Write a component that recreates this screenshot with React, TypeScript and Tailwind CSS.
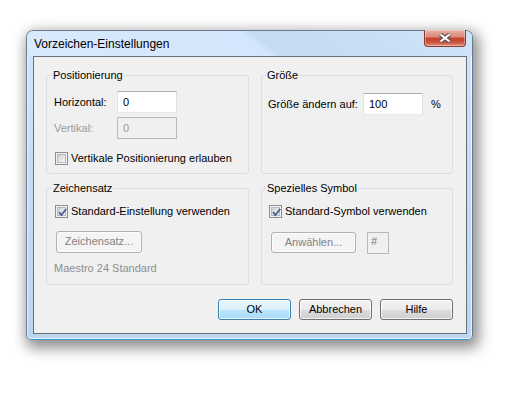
import type { ReactNode } from "react";

const CheckBox = ({ checked }: { checked?: boolean }) => (
  <span className="relative flex h-[13px] w-[13px] shrink-0 items-center justify-center border border-[#8f8f8f] bg-[#f4f4f4]">
    <span className="h-[9px] w-[9px] border border-[#b4b9bf] bg-[linear-gradient(135deg,#cdd1d7,#f7f7f7)]" />
    {checked && (
      <svg className="absolute left-[1px] top-[1px]" width="11" height="11" viewBox="0 0 11 11">
        <path d="M2 5.2 L4.4 8 L9.2 2" fill="none" stroke="#4c5f94" strokeWidth="1.8" />
      </svg>
    )}
  </span>
);

const TextBox = ({ value, disabled, className = "" }: { value: string; disabled?: boolean; className?: string }) => (
  <div
    className={
      "flex h-[22px] items-center pl-[5px] " +
      (disabled
        ? "border border-[#b8b8b8] bg-[#f0f0f0] text-[#9a9a9a] "
        : "border border-[#abadb3] border-b-[#e3e9ef] border-l-[#e2e3ea] border-r-[#dbdfe6] bg-white ") +
      className
    }
  >
    {value}
  </div>
);

const Button = ({
  children,
  kind = "normal",
  className = "",
}: {
  children: ReactNode;
  kind?: "normal" | "default" | "disabled";
  className?: string;
}) => {
  const look = {
    normal:
      "border-[#707070] bg-[linear-gradient(#f2f2f2_0%,#ebebeb_50%,#dddddd_50%,#cfcfcf_100%)] text-black",
    default:
      "border-[#3c7fb1] bg-[linear-gradient(#eaf6fd_0%,#d9f0fc_50%,#bee6fd_50%,#a7d9f5_100%)] text-black",
    disabled: "border-[#adb2b5] bg-[#f4f4f4] text-[#838383]",
  }[kind];
  return (
    <div
      className={
        "flex h-[21px] items-center justify-center whitespace-nowrap rounded-[3px] border shadow-[inset_0_0_0_1px_rgba(255,255,255,0.75)] " +
        look +
        " " +
        className
      }
    >
      {children}
    </div>
  );
};

const Group = ({ title, className = "", children }: { title: string; className?: string; children: ReactNode }) => (
  <fieldset className={"rounded-[3px] border border-[#d5dfe5] " + className}>
    <legend className="ml-[-2px] px-[1px] leading-[15px]">{title}</legend>
    {children}
  </fieldset>
);

export default function App() {
  return (
    <div className="min-h-[396px] w-[516px] whitespace-nowrap bg-white pl-[26px] pt-[30px] font-['Liberation_Sans',sans-serif] text-[11px] text-black">
      {/* window frame */}
      <div className="flex h-[310px] w-[447px] flex-col rounded-t-[7px] rounded-b-[5px] border border-[#6b7a8c] border-b-[#3b95d1] bg-[linear-gradient(180deg,#d3e6fb_0%,#c6dcf3_45%,#bdd6f0_100%)] shadow-[inset_0_0_0_1px_rgba(255,255,255,0.65),3px_5px_14px_3px_rgba(0,0,0,0.45)]">
        {/* title bar */}
        <div className="flex h-[25px] items-center justify-between rounded-t-[6px] bg-[linear-gradient(38deg,#d8e9fc_0%,#d3e6fb_51%,#c4dbf3_53.5%,#c8def5_75%,#d2e5f9_100%)] pl-[7px] pr-[6px]">
          <span className="text-[12px]">Vorzeichen-Einstellungen</span>
          <div className="-mt-[1px] flex h-[17px] w-[42px] items-center justify-center self-start rounded-b-[4px] border border-t-0 border-[#8a3a30] bg-[linear-gradient(180deg,#eab1a4_0%,#dc8a7c_42%,#c4432f_52%,#c9503a_75%,#e0957c_100%)] shadow-[inset_0_0_0_1px_rgba(255,255,255,0.35)]">
            <svg width="14" height="10" viewBox="0 0 14 10">
              <path d="M2.5 1.5 L11.5 8.5 M11.5 1.5 L2.5 8.5" stroke="#505050" strokeWidth="4.2" />
              <path d="M2.5 1.5 L11.5 8.5 M11.5 1.5 L2.5 8.5" stroke="#ffffff" strokeWidth="2.2" />
            </svg>
          </div>
        </div>

        {/* client area */}
        <div className="ml-[6px] mr-[5px] h-[278px] border border-[#646f7c] bg-[#f0f0f0] pl-[12px] pr-[13px] pt-[11px]">
          <div className="grid grid-cols-[203px_192px] gap-x-[12px] gap-y-[7px]">
            <Group title="Positionierung" className="h-[106px] px-[7px] pt-[8px]">
              <div className="flex h-[22px] items-center">
                <span className="w-[63px]">Horizontal:</span>
                <TextBox value="0" className="w-[60px]" />
              </div>
              <div className="mt-[4px] flex h-[22px] items-center">
                <span className="w-[63px] text-[#9a9a9a]">Vertikal:</span>
                <TextBox value="0" disabled className="w-[60px]" />
              </div>
              <div className="mt-[11px] flex items-center gap-[3px] pl-[1px]">
                <CheckBox />
                <span>Vertikale Positionierung erlauben</span>
              </div>
            </Group>

            <Group title="Größe" className="h-[106px] px-[6px] pt-[10px]">
              <div className="flex h-[22px] items-center">
                <span className="w-[95px]">Größe ändern auf:</span>
                <TextBox value="100" className="w-[60px]" />
                <span className="ml-[8px]">%</span>
              </div>
            </Group>

            <Group title="Zeichensatz" className="h-[104px] px-[7px] pt-[7px]">
              <div className="flex items-center gap-[3px] pl-[1px]">
                <CheckBox checked />
                <span>Standard-Einstellung verwenden</span>
              </div>
              <Button kind="disabled" className="ml-[2px] mt-[11px] h-[22px] w-[86px]">
                Zeichensatz...
              </Button>
              <div className="mt-[8px] leading-[15px] text-[#8e8e8e]">Maestro 24 Standard</div>
            </Group>

            <Group title="Spezielles Symbol" className="h-[104px] px-[6px] pt-[7px]">
              <div className="flex items-center gap-[3px] pl-[1px]">
                <CheckBox checked />
                <span>Standard-Symbol verwenden</span>
              </div>
              <div className="mt-[12px] flex h-[22px] items-center">
                <Button kind="disabled" className="ml-[3px] w-[85px]">
                  Anwählen...
                </Button>
                <div className="ml-[11px] h-[22px] w-[22px] border border-[#b8b8b8] bg-[#f0f0f0] pl-[3px] pt-[1px] leading-[15px] text-[#7a7a7a]">
                  #
                </div>
              </div>
            </Group>
          </div>

          <div className="mt-[14px] flex justify-end gap-[8px]">
            <Button kind="default" className="w-[73px]">
              OK
            </Button>
            <Button className="w-[73px]">Abbrechen</Button>
            <Button className="w-[73px]">Hilfe</Button>
          </div>
        </div>
      </div>
    </div>
  );
}
